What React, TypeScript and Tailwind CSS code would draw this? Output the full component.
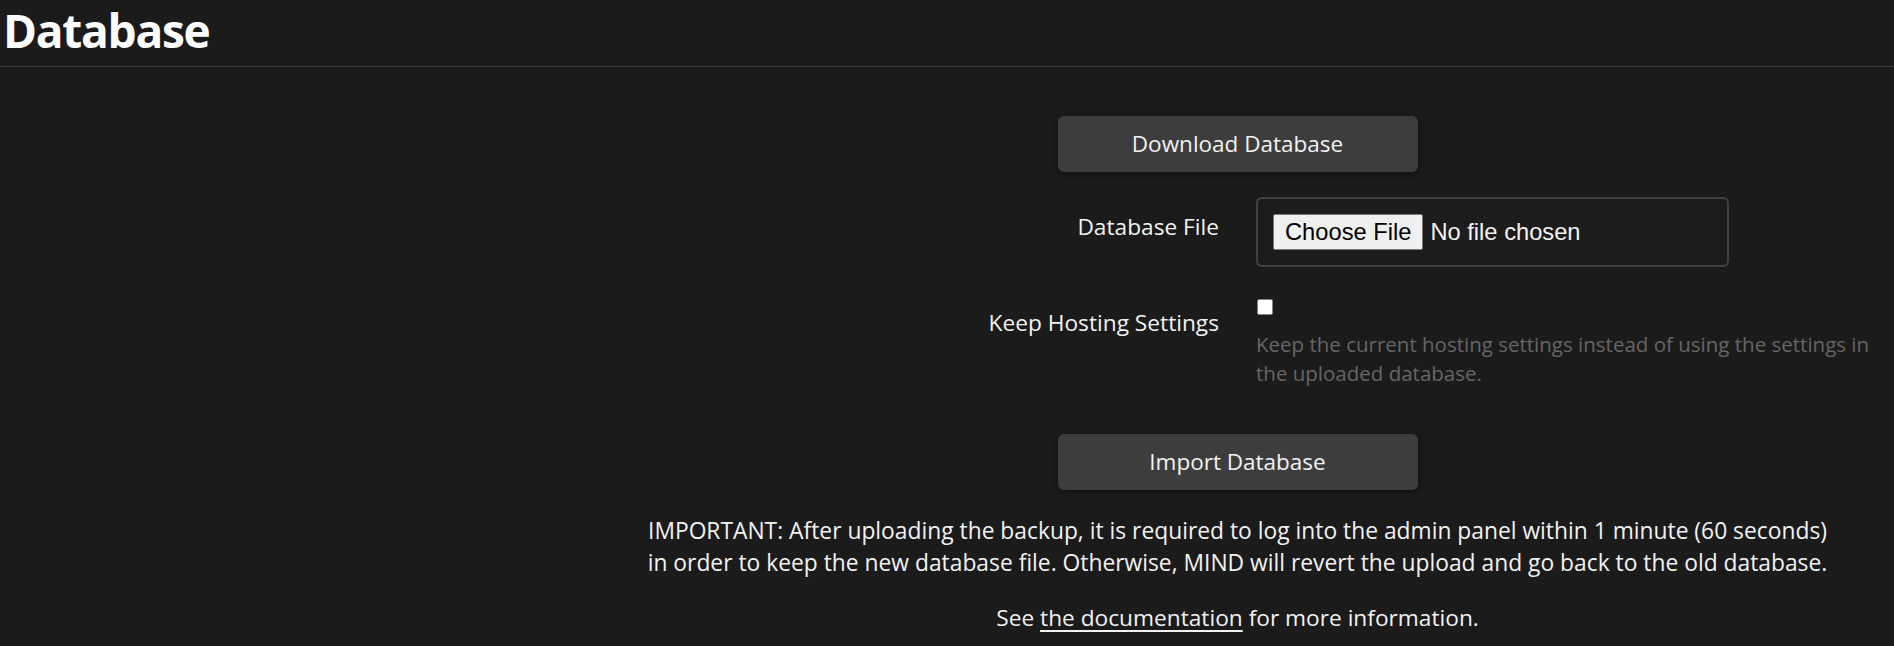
import React from "react";

const body = "font-['Open_Sans',sans-serif]";

export default function App() {
  return (
    <div className={`${body} min-h-screen w-full bg-[#1b1b1b] text-[#f2f2f2]`}>
      <header className="pt-[5px] pb-[11px] border-b border-[#3a3a3a]">
        <h1 className="pl-[3px] text-[46px] leading-[50px] font-bold tracking-[-1.25px] text-white">Database</h1>
      </header>

      <main className="ml-[581px] flex flex-col items-center">
        <button className="mt-[49px] w-[360px] h-[56px] rounded-[6px] bg-[#3d3d3d] text-[22.5px] text-[#f2f2f2] shadow-[0_2px_6px_rgba(0,0,0,0.45)]">
          Download Database
        </button>

        <div className="mt-[25px] w-[1277px] grid grid-cols-[620px_620px] gap-x-[37px]">
          <div className="pt-[15px] text-right text-[22.7px] leading-[30px]">Database File</div>
          <div>
            <div className="w-[473px] h-[70px] rounded-[6px] border-2 border-[#424242] bg-[#1c1c1c] pl-[15px] flex items-center">
              <input
                type="file"
                className="font-['Liberation_Sans',Arial,sans-serif] text-[23.7px] text-[#f2f2f2] file:mr-[7px] file:h-[36px] file:px-[11px] file:bg-[#efefef] file:text-black file:border file:border-[#767676] file:rounded-[2px]"
              />
            </div>
          </div>

          <div className="mt-[32px] pt-[9px] text-right text-[22.7px] leading-[30px]">Keep Hosting Settings</div>
          <div className="mt-[32px]">
            <input
              type="checkbox"
              className="block appearance-none w-[16px] h-[16px] bg-white border border-[#858585] rounded-[2px] ml-[1px]"
            />
            <p className="mt-[15px] text-[20.5px] leading-[29px] text-[#666666]">
              Keep the current hosting settings instead of using the settings in the uploaded database.
            </p>
          </div>
        </div>

        <button className="mt-[46px] w-[360px] h-[56px] rounded-[6px] bg-[#3d3d3d] text-[22.5px] text-[#f2f2f2] shadow-[0_2px_6px_rgba(0,0,0,0.45)]">
          Import Database
        </button>

        <p className="mt-[25px] text-center text-[22.82px] leading-[32px]">
          IMPORTANT: After uploading the backup, it is required to log into the admin panel within 1 minute (60 seconds)
          <br />
          in order to keep the new database file. Otherwise, MIND will revert the upload and go back to the old database.
        </p>

        <p className="mt-[23px] text-center text-[22.7px] leading-[32px]">
          See{" "}
          <a href="#" className="underline underline-offset-[4px]">
            the documentation
          </a>{" "}
          for more information.
        </p>
      </main>
    </div>
  );
}
